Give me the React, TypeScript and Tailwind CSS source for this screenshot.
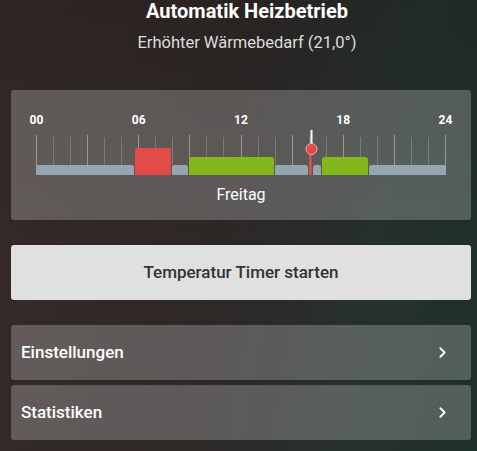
import React from "react";
import { ChevronRight } from "lucide-react";

const X0 = 36;
const HW = 409 / 24;

const bars = [
  { x1: 36, x2: 134, y: 165, c: "#95a6ae" },
  { x1: 135, x2: 171, y: 148, c: "#e24b48" },
  { x1: 172, x2: 188, y: 165, c: "#95a6ae" },
  { x1: 189, x2: 274, y: 157, c: "#82b819" },
  { x1: 275, x2: 308, y: 165, c: "#95a6ae" },
  { x1: 313, x2: 321, y: 165, c: "#95a6ae" },
  { x1: 322, x2: 368, y: 157, c: "#82b819" },
  { x1: 369, x2: 446, y: 165, c: "#95a6ae" },
];

function Chart() {
  const ox = 35;
  const oy = 128;
  const ticks = Array.from({ length: 25 }, (_, i) => i);
  return (
    <svg width={413} height={48} className="block">
      {ticks.map((i) => {
        const x = Math.round(X0 + i * HW) - ox + 0.5;
        const major = i % 3 === 0;
        return (
          <line
            key={i}
            x1={x}
            x2={x}
            y1={(major ? 135 : 137) - oy}
            y2={175 - oy}
            stroke={major ? "rgba(255,255,255,0.38)" : "rgba(255,255,255,0.2)"}
            strokeWidth={1}
          />
        );
      })}
      {bars.map((b, i) => {
        const x = b.x1 - ox;
        const w = b.x2 - b.x1;
        const y = b.y - oy;
        const h = 175 - b.y;
        const r = 2.5;
        return (
          <path
            key={i}
            d={`M${x} ${y + h} V${y + r} Q${x} ${y} ${x + r} ${y} H${x + w - r} Q${x + w} ${y} ${x + w} ${y + r} V${y + h} Z`}
            fill={b.c}
          />
        );
      })}
      <line x1={311.5 - ox} x2={311.5 - ox} y1={130 - oy} y2={148 - oy} stroke="#ffffff" strokeWidth={2} />
      <line x1={310.5 - ox} x2={310.5 - ox} y1={149 - oy} y2={175 - oy} stroke="#e24b48" strokeWidth={2.5} />
      <circle cx={311.5 - ox} cy={149 - oy} r={5.5} fill="#e24b48" stroke="rgba(255,190,190,0.8)" strokeWidth={1} />
    </svg>
  );
}

export default function App() {
  const labels = ["00", "06", "12", "18", "24"];
  return (
    <div
      className="w-full h-[451px] overflow-hidden bg-[linear-gradient(180deg,rgba(0,0,0,0.12)_0%,rgba(0,0,0,0)_60%),linear-gradient(100deg,#352b28_0%,#2e2826_45%,#26302c_75%,#1e302c_100%)] text-white"
      style={{ fontFamily: "Roboto, 'Noto Sans', sans-serif" }}
    >
      <div className="flex flex-col items-center pl-[17px]">
        <div className="text-[20px] leading-[22px] font-bold">Automatik Heizbetrieb</div>
        <div className="mt-[11px] text-[16.5px] leading-[20px] text-[#dcdcdc]">Erhöhter Wärmebedarf (21,0°)</div>
      </div>

      <div className="mx-[11px] w-[460px] mt-[37px] h-[130px] rounded-[3px] bg-[rgba(255,255,255,0.23)] flex flex-col items-center pt-[22px]">
        <div className="relative w-[413px] h-[16px] self-start ml-[24px]">
          {labels.map((l, i) => (
            <div
              key={l}
              className="absolute top-0 w-[30px] -ml-[15px] text-center text-[12px] leading-[16px] font-bold"
              style={{ left: X0 + i * 6 * HW - 35 + 0.5 }}
            >
              {l}
            </div>
          ))}
        </div>
        <div className="self-start ml-[24px]">
          <Chart />
        </div>
        <div className="mt-[9px] text-[16px] leading-[20px]">Freitag</div>
      </div>

      <div className="mx-[11px] w-[460px] mt-[25px] h-[55px] rounded-[3px] bg-[#e0e0e0] flex items-center justify-center text-[17px] font-medium text-[#333333]">
        Temperatur Timer starten
      </div>

      <div className="mx-[11px] w-[460px] mt-[25px] flex flex-col gap-[5px]">
        {["Einstellungen", "Statistiken"].map((t) => (
          <div
            key={t}
            className="h-[55px] rounded-[3px] bg-[rgba(255,255,255,0.23)] flex items-center justify-between pl-[10px] pr-[20px]"
          >
            <span className="text-[17px] font-medium">{t}</span>
            <ChevronRight size={17} strokeWidth={2.6} />
          </div>
        ))}
      </div>
    </div>
  );
}
